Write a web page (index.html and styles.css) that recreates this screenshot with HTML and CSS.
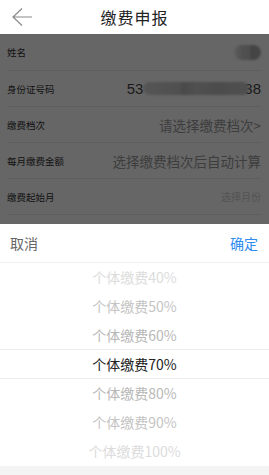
FILE: index.html
```html
<!DOCTYPE html>
<html lang="zh-CN">
<head>
  <meta charset="UTF-8">
  <meta name="viewport" content="width=device-width,initial-scale=1.0">
  <title>缴费申报</title>
  <link rel="stylesheet" href="styles.css">
</head>
<body>

  <div class="topbar">
    <button class="back" aria-label="返回">
      <svg width="22" height="20" viewBox="0 0 22 20">
        <path d="M11 1.5 L2 10 L11 18.5 M2 10 H21" fill="none" stroke="#8a8a8a" stroke-width="1.2"/>
      </svg>
    </button>
    <h1>缴费申报</h1>
  </div>

  <!-- 表单 (被遮罩盖住) -->
  <div class="form">
    <div class="row">
      <span class="label">姓名</span>
      <span class="secret name"></span>
    </div>
    <div class="row">
      <span class="label">身份证号码</span>
      <span class="value idno">53<span class="secret id"></span>38</span>
    </div>
    <div class="row">
      <span class="label">缴费档次</span>
      <span class="value">请选择缴费档次&gt;</span>
    </div>
    <div class="row">
      <span class="label">每月缴费金额</span>
      <span class="value">选择缴费档次后自动计算</span>
    </div>
    <div class="row">
      <span class="label">缴费起始月</span>
      <span class="value hint">选择月份</span>
    </div>
  </div>

  <!-- 选择器 -->
  <div class="picker">
    <div class="picker-head">
      <span class="cancel">取消</span>
      <span class="ok">确定</span>
    </div>
    <ul class="wheel">
      <li class="far">个体缴费40%</li>
      <li class="mid">个体缴费50%</li>
      <li class="near">个体缴费60%</li>
      <li class="current">个体缴费70%</li>
      <li class="near">个体缴费80%</li>
      <li class="mid">个体缴费90%</li>
      <li class="far">个体缴费100%</li>
    </ul>
    <div class="picker-foot"></div>
  </div>

</body>
</html>
```

FILE: styles.css
```css
body {
  margin: 0;
  padding: 0;
  background-color: #ffffff;
  font-family: "Noto Sans CJK SC", "Noto Sans", sans-serif;
  color: #333;
}

.topbar {
  position: relative;
  height: 34px;
  display: flex;
  align-items: center;
  justify-content: center;
  background-color: #fff;
}
.topbar h1 {
  margin: 0;
  font-size: 16px;
  font-weight: 400;
  color: #222;
  letter-spacing: 1px;
}
.back {
  position: absolute;
  left: 11px;
  top: 7px;
  padding: 0;
  border: none;
  background: none;
  line-height: 0;
}

.form {
  position: relative;
  height: 190px;
  background-color: #fff;
}
.form::after {
  content: "";
  position: absolute;
  top: 0;
  left: 0;
  right: 0;
  bottom: 0;
  background-color: rgba(0, 0, 0, 0.6);
}

.row {
  height: 35px;
  margin: 0 8px 0 7px;
  display: flex;
  align-items: center;
  justify-content: space-between;
  border-bottom: 1px solid #eaeaea;
}
.row:first-child {
  height: 36px;
}
.label {
  font-size: 9.5px;
  color: #303030;
}
.value {
  font-size: 13.5px;
  color: #9a9a9a;
  white-space: nowrap;
}
.value.hint {
  font-size: 10px;
  color: #d0d0d0;
}
.idno {
  display: flex;
  align-items: center;
  font-family: "Liberation Sans", sans-serif;
  font-size: 15px;
  color: #444;
}

.secret {
  display: inline-block;
  border-radius: 8px;
  filter: blur(1px);
}
.secret.name {
  width: 27px;
  height: 15px;
  background: linear-gradient(90deg, #ececec 0, #c8c8c8 30%, #c2c2c2 60%, #a8a8a8 62%, #b0b0b0 100%);
}
.secret.id {
  width: 106px;
  height: 13px;
  margin: 0 -5px 0 0;
  background: linear-gradient(90deg, #d6d6d6 0, #c6c6c6 35%, #b6b6b6 38%, #c8c8c8 50%, #bdbdbd 70%, #c8c8c8 100%);
}

.picker {
  background-color: #fff;
}
.picker-head {
  height: 38px;
  display: flex;
  align-items: center;
  justify-content: space-between;
  padding: 0 11px 0 10px;
  border-bottom: 1px solid #efefef;
  font-size: 14px;
}
.cancel {
  color: #666;
}
.ok {
  color: #2d8cf0;
}

.wheel {
  margin: 0;
  padding: 0;
  list-style: none;
}
.wheel li {
  height: 29px;
  line-height: 29px;
  text-align: center;
  font-size: 14px;
  color: #bbb;
}
.wheel li.far {
  color: #dcdcdc;
}
.wheel li.mid {
  color: #c4c4c4;
}
.wheel li.near {
  color: #b8b8b8;
}
.wheel li.current {
  height: 28px;
  line-height: 28px;
  color: #222;
  border-top: 1px solid #ececec;
  border-bottom: 1px solid #ececec;
  margin-top: -1px;
}

.picker-foot {
  height: 10px;
  background-color: #f4f4f4;
}
```
